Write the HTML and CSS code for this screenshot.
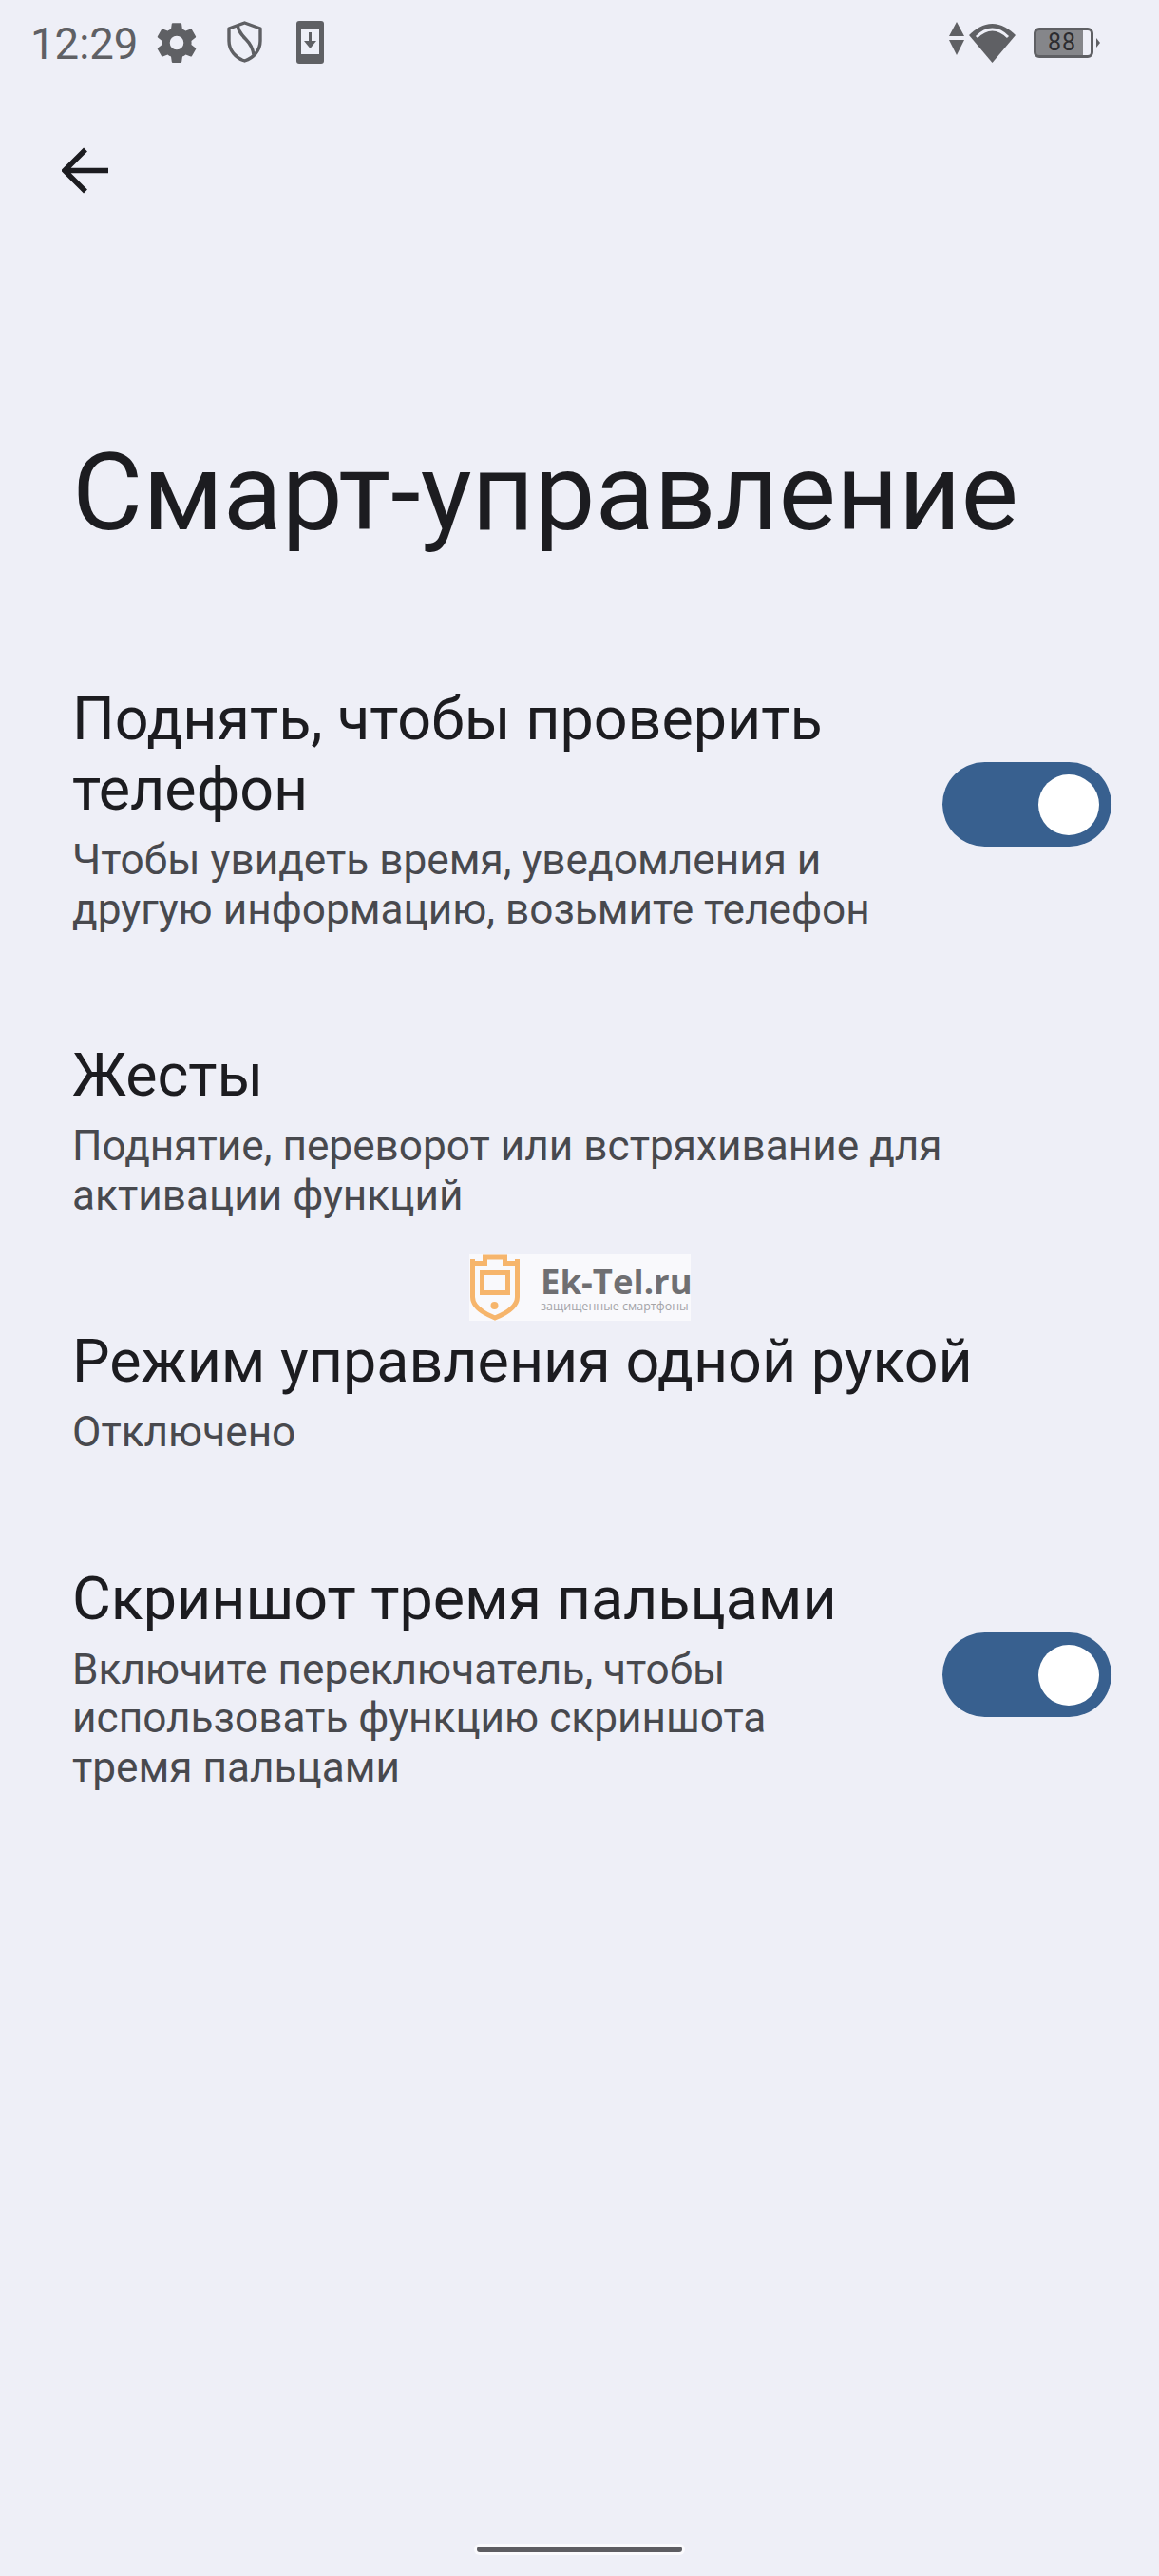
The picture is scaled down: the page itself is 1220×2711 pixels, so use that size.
FILE: index.html
```html
<!DOCTYPE html>
<html lang="ru">
<head>
  <meta charset="UTF-8">
  <meta name="viewport" content="width=device-width, initial-scale=1.0">
  <title>Смарт-управление</title>
  <link rel="stylesheet" href="styles.css">
</head>
<body>

<section class="screen">
  <!-- Status bar -->
  <header class="status-bar">
    <div class="status-left">
      <span class="status-time">12:29</span>
      <svg class="icon-gear" viewBox="0 0 24 24"><path fill="#5f6064" d="M19.4 13c.04-.32.07-.66.07-1s-.03-.68-.07-1l2.1-1.65c.2-.15.25-.42.12-.64l-2-3.46c-.12-.22-.38-.3-.6-.22l-2.5 1c-.52-.4-1.08-.73-1.7-.98l-.37-2.65A.5.5 0 0 0 14 2h-4a.5.5 0 0 0-.5.42l-.37 2.65c-.62.25-1.18.58-1.7.98l-2.5-1c-.22-.08-.48 0-.6.22l-2 3.46c-.13.22-.08.49.12.64L4.55 11c-.04.32-.07.66-.07 1s.03.68.07 1l-2.1 1.65c-.2.15-.25.42-.12.64l2 3.46c.12.22.38.3.6.22l2.5-1c.52.4 1.08.73 1.7.98l.37 2.65c.05.24.26.42.5.42h4c.24 0 .45-.18.5-.42l.37-2.65c.62-.25 1.18-.58 1.7-.98l2.5 1c.22.08.48 0 .6-.22l2-3.46c.13-.22.08-.49-.12-.64L19.4 13zM12 15.500a3.500 3.500 0 1 1 0-7 3.500 3.500 0 0 1 0 7z"/></svg>
      <svg class="icon-shield" viewBox="0 0 37 44"><path fill="none" stroke="#5f6064" stroke-width="3.400" stroke-linejoin="round" d="M18.500 2 35 8v13c0 10-7 18-16.500 21C9 39 2 31 2 21V8z"/><path fill="none" stroke="#5f6064" stroke-width="3.400" d="M11 4.500c1 7 5 11 9 15 5 5 7 9 8 16"/></svg>
      <svg class="icon-phone" viewBox="0 0 29 45"><rect width="29" height="45" rx="3" fill="#5f6064"/><rect x="5" y="8" width="19" height="27" fill="#eeeff7"/><path fill="none" stroke="#5f6064" stroke-width="3" d="M14.500 12v13"/><path fill="#5f6064" d="M8 21h13l-6.500 8z"/></svg>
    </div>
    <div class="status-right">
      <svg class="icon-arrows" viewBox="0 0 16 35"><path fill="#5f6064" d="M8 0l8 15H0zM0 19h16L8 35z"/></svg>
      <svg class="icon-wifi" viewBox="0 0 49 41"><path fill="#5f6064" d="M24.500 41 0 12C7 5 15 0 24.500 0S42 5 49 12z"/><path fill="none" stroke="#eeeff7" stroke-width="3" d="M8 14c5-5 10-8 16.500-8S36 9 41 14"/></svg>
      <div class="battery">
        <div class="battery-body"><span class="battery-level">88</span></div>
        <span class="battery-nub"></span>
      </div>
    </div>
  </header>

  <button class="back-btn">
    <svg viewBox="0 0 49 49"><path fill="none" stroke="#1c1c20" stroke-width="5.500" d="M49 24.500H4M25 2.500 3 24.500 25 46.500"/></svg>
  </button>

  <h1 class="page-title">Смарт-управление</h1>

  <!-- Settings list -->
  <div class="settings-list">
    <div class="settings-item">
      <div class="item-text">
        <div class="item-title">Поднять, чтобы проверить телефон</div>
        <div class="item-sub">Чтобы увидеть время, уведомления и другую информацию, возьмите телефон</div>
      </div>
      <span class="switch switch-raise"><span class="switch-knob"></span></span>
    </div>
    <div class="settings-item">
      <div class="item-text item-text-wide">
        <div class="item-title">Жесты</div>
        <div class="item-sub">Поднятие, переворот или встряхивание для активации функций</div>
      </div>
    </div>
    <div class="settings-item">
      <div class="item-text item-text-wide">
        <div class="item-title">Режим управления одной рукой</div>
        <div class="item-sub">Отключено</div>
      </div>
    </div>
    <div class="settings-item">
      <div class="item-text">
        <div class="item-title">Скриншот тремя пальцами</div>
        <div class="item-sub">Включите переключатель, чтобы<br>использовать функцию скриншота<br>тремя пальцами</div>
      </div>
      <span class="switch switch-shot"><span class="switch-knob"></span></span>
    </div>
  </div>

  <!-- Watermark over the content -->
  <div class="watermark">
    <svg class="watermark-logo" viewBox="0 0 54 70"><path fill="none" stroke="#f6b56c" stroke-width="5" d="M3.500 5v4.500h13V3h21v6.500h13V5M3.500 8v37c0 10 11 17 23.500 22 12.500-5 23.500-12 23.500-22V8"/><path fill="none" stroke="#f6b56c" stroke-width="5" d="M13.500 19.500h27v21h-27z"/><circle cx="26.500" cy="54" r="4" fill="#f6b56c"/></svg>
    <div class="watermark-text">
      <div class="watermark-name">Ek-Tel.ru</div>
      <div class="watermark-tag">защищенные смартфоны</div>
    </div>
  </div>

  <div class="home-bar"></div>
</section>

</body>
</html>
```

FILE: styles.css
```css
* {
  box-sizing: border-box;
}
html, body {
  margin: 0;
  padding: 0;
}
body {
  background-color: #eeeff7;
  font-family: Roboto, "Noto Sans", sans-serif;
}
.screen {
  position: relative;
  width: 1220px;
  height: 2711px;
  overflow: hidden;
  background-color: #eeeff7;
}

/* Status bar */
.status-bar {
  display: flex;
  justify-content: space-between;
  align-items: flex-start;
  height: 90px;
  padding: 22px 62px 0 32px;
}
.status-left {
  display: flex;
  align-items: flex-start;
}
.status-time {
  font-size: 45.500px;
  line-height: 50px;
  color: #5f6064;
  margin-right: 16px;
}
.icon-gear {
  width: 50px;
  height: 50px;
  margin-top: -2px;
  margin-right: 28px;
}
.icon-shield {
  width: 37px;
  height: 44px;
  margin-right: 36px;
}
.icon-phone {
  width: 29px;
  height: 45px;
}
.status-right {
  display: flex;
  align-items: flex-start;
}
.icon-arrows {
  width: 16px;
  height: 35px;
  margin-top: 1px;
  margin-right: 5px;
}
.icon-wifi {
  width: 49px;
  height: 41px;
  margin-top: 3px;
  margin-right: 19px;
}
.battery {
  display: flex;
  align-items: center;
  margin-top: 7px;
}
.battery-body {
  width: 63px;
  height: 32px;
  border: 3px solid #5f6064;
  border-radius: 6px;
  background: linear-gradient(90deg, #85868a 86%, #eeeff7 86%);
  display: flex;
  align-items: center;
  padding-left: 12px;
}
.battery-level {
  font-size: 25px;
  line-height: 24px;
  color: #2c2c30;
  letter-spacing: 1px;
}
.battery-nub {
  width: 0;
  height: 0;
  margin-left: 3px;
  border-left: 4px solid #5f6064;
  border-top: 5px solid transparent;
  border-bottom: 5px solid transparent;
}

/* Back arrow and title */
.back-btn {
  display: block;
  width: 49px;
  height: 49px;
  margin: 65px 0 0 65px;
  padding: 0;
  background: none;
  border: none;
}
.back-btn svg {
  display: block;
  width: 49px;
  height: 49px;
}
.page-title {
  margin: 247px 0 0;
  padding: 0 0 0 76px;
  font-size: 114px;
  line-height: 134px;
  font-weight: 400;
  color: #1c1c20;
}

/* Settings rows */
.settings-list {
  display: flex;
  flex-direction: column;
  gap: 112px;
  padding: 0 50px 0 76px;
  margin-top: 135px;
}
.settings-item {
  display: flex;
  justify-content: space-between;
  align-items: center;
}
.item-text {
  width: 880px;
}
.item-text-wide {
  width: 1090px;
}
.item-title {
  font-size: 62.800px;
  line-height: 74px;
  color: #1c1c20;
}
.item-sub {
  margin-top: 12px;
  font-size: 44.200px;
  line-height: 51.500px;
  color: #48494e;
}
.switch {
  display: flex;
  justify-content: flex-end;
  align-items: center;
  width: 178px;
  height: 89px;
  padding-right: 13px;
  border-radius: 45px;
  background-color: #38608f;
  flex-shrink: 0;
}
.switch-raise {
  margin-bottom: 10px;
}
.switch-shot {
  margin-bottom: 6px;
}
.switch-knob {
  display: block;
  width: 64px;
  height: 64px;
  border-radius: 50%;
  background-color: #fff;
}

/* Watermark */
.watermark {
  position: absolute;
  left: 494px;
  top: 1320px;
  width: 233px;
  height: 70px;
  display: flex;
  background-color: #f9f9fc;
}
.watermark-logo {
  width: 54px;
  height: 70px;
  flex-shrink: 0;
}
.watermark-text {
  margin-left: 21px;
  white-space: nowrap;
}
.watermark-name {
  font-family: "Open Sans", sans-serif;
  font-size: 36.500px;
  line-height: 40px;
  margin-top: 8px;
  font-weight: 700;
  color: #6f6f72;
}
.watermark-tag {
  font-family: "Open Sans", sans-serif;
  font-size: 12.500px;
  line-height: 14px;
  color: #a4a4a8;
}

/* Home indicator */
.home-bar {
  position: absolute;
  left: 502px;
  top: 2680px;
  width: 216px;
  height: 6px;
  border-radius: 3px;
  background-color: #5d5d62;
  box-shadow: 0 0 0 3px #fafafd;
}
```
